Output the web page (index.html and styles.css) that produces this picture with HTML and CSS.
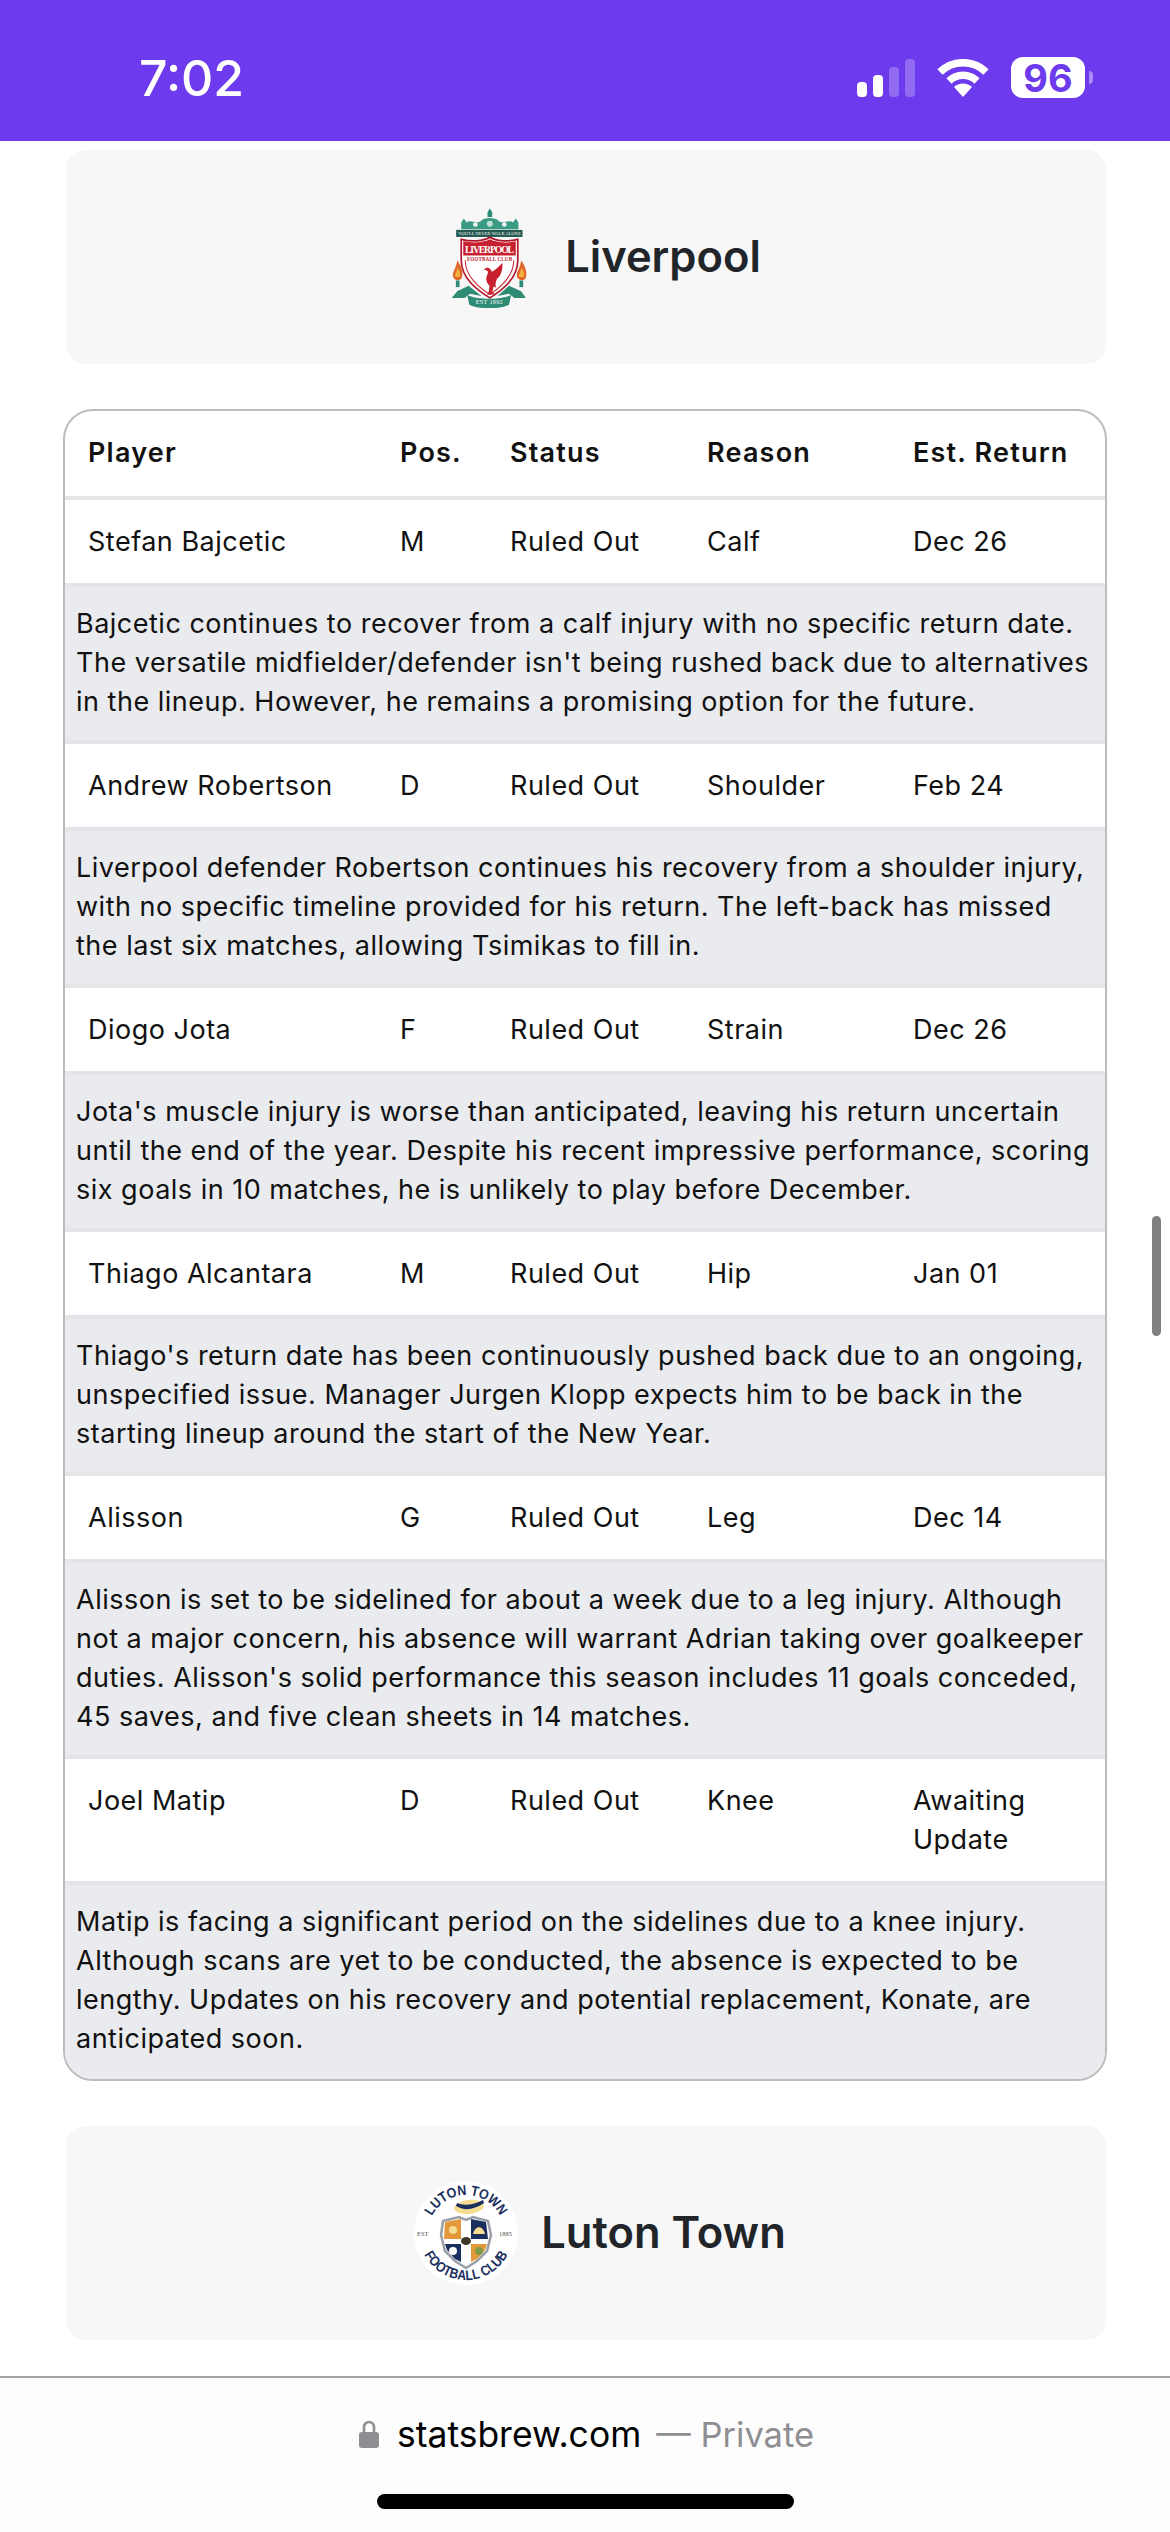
FILE: index.html
```html
<!DOCTYPE html>
<html lang="en">
<head>
    <meta charset="UTF-8">
    <meta name="viewport" content="width=device-width, initial-scale=1.0">
    <title>Injuries - Stats Brew</title>
    <link rel="stylesheet" href="styles.css">
</head>
<body>
    <header class="status-bar">
        <span class="clock">7:02</span>
        <div class="status-icons">
            <svg class="signal" width="58" height="38" viewBox="0 0 58 38">
                <rect x="0" y="23" width="10" height="15" rx="4" fill="#fff"/>
                <rect x="16" y="16" width="10" height="22" rx="4" fill="#fff"/>
                <rect x="32" y="8" width="10" height="30" rx="4" fill="#fff" opacity="0.25"/>
                <rect x="48" y="0" width="10" height="38" rx="4" fill="#fff" opacity="0.25"/>
            </svg>
            <svg class="wifi" width="52" height="38" viewBox="0 0 52 38">
                <path d="M3 13 A33 33 0 0 1 49 13" fill="none" stroke="#fff" stroke-width="7.5"/>
                <path d="M12 22 A20 20 0 0 1 40 22" fill="none" stroke="#fff" stroke-width="7.5"/>
                <path d="M26 38 L17 28 A13 13 0 0 1 35 28 Z" fill="#fff"/>
            </svg>
            <div class="battery">
                <span class="battery-level">96</span>
                <span class="battery-nub"></span>
            </div>
        </div>
    </header>

    <main class="content">
        <div class="team-card">
            <svg class="crest-lfc" width="76" height="101" viewBox="150 82 225 300">
                <!-- gates -->
                <path d="M258 98 L265 86 L272 98 L272 112 L258 112 Z" fill="#2e8b74"/>
                <path d="M180 148 V128 L188 116 L196 128 C210 118 222 134 238 124 C246 112 284 112 292 124 C308 134 320 118 334 128 L342 116 L350 128 V148 Z" fill="#3a9a82"/>
                <circle cx="222" cy="134" r="7" fill="#f7f7f7"/>
                <circle cx="265" cy="132" r="9" fill="#bfe2d8"/>
                <circle cx="308" cy="134" r="7" fill="#f7f7f7"/>
                <rect x="165" y="150" width="197" height="21" fill="#24594f"/>
                <text class="crest-motto" x="264" y="165" text-anchor="middle" textLength="186">YOU'LL NEVER WALK ALONE</text>
                <!-- shield -->
                <path d="M180 178 C210 186 245 184 265 172 C285 184 320 186 348 178 V240 C348 295 300 330 265 352 C230 330 180 295 180 240 Z" fill="#fff" stroke="#b3162a" stroke-width="5"/>
                <path d="M186 184 C214 190 245 188 265 178 C285 188 316 190 342 184 V226 H186 Z" fill="#c8202f"/>
                <path d="M192 240 C192 290 235 322 265 342" fill="none" stroke="#c8202f" stroke-width="3"/>
                <path d="M336 240 C336 290 295 322 265 342" fill="none" stroke="#c8202f" stroke-width="3"/>
                <text class="crest-name" x="264" y="220" text-anchor="middle" textLength="146">LIVERPOOL</text>
                <text class="crest-sub" x="264" y="241" text-anchor="middle" textLength="134">FOOTBALL CLUB</text>
                <!-- liver bird -->
                <path d="M247 268 L256 262 L264 264 L272 274 C282 268 292 258 302 248 C304 268 298 286 286 296 C282 306 280 314 284 322 L276 318 L272 336 L284 342 H256 L262 334 L264 316 C256 308 252 298 256 288 L260 274 L254 270 Z" fill="#c8202f"/>
                <!-- flames -->
                <path d="M168 240 C182 260 186 276 182 292 C178 302 160 302 156 290 C152 274 166 264 168 240 Z" fill="#e0662a"/>
                <path d="M169 262 C176 272 178 282 176 290 H162 C160 280 168 274 169 262 Z" fill="#f3b23c"/>
                <path d="M358 240 C372 260 376 276 372 292 C368 302 350 302 346 290 C342 274 356 264 358 240 Z" fill="#e0662a"/>
                <path d="M359 262 C366 272 368 282 366 290 H352 C350 280 358 274 359 262 Z" fill="#f3b23c"/>
                <rect x="164" y="300" width="11" height="20" fill="#2e8b74"/>
                <rect x="353" y="300" width="11" height="20" fill="#2e8b74"/>
                <!-- ribbons -->
                <path d="M152 352 L168 332 L202 316 L240 346 L206 340 L190 352 Z" fill="#2e8b74"/>
                <path d="M372 352 L358 332 L322 316 L288 346 L322 340 L338 352 Z" fill="#2e8b74"/>
                <path d="M198 344 C232 358 296 358 328 344 L322 372 C296 386 230 386 204 372 Z" fill="#2e8b74"/>
                <text class="crest-est" x="263" y="371" text-anchor="middle" textLength="80">EST 1892</text>
            </svg>
            <h2 class="team-name">Liverpool</h2>
        </div>

        <div class="table-wrap">
            <table class="injury-table">
                <colgroup>
                    <col class="col-player">
                    <col class="col-pos">
                    <col class="col-status">
                    <col class="col-reason">
                    <col class="col-return">
                </colgroup>
                <thead>
                    <tr>
                        <th>Player</th>
                        <th>Pos.</th>
                        <th>Status</th>
                        <th>Reason</th>
                        <th>Est. Return</th>
                    </tr>
                </thead>
                <tbody>
                    <tr>
                        <td>Stefan Bajcetic</td><td>M</td><td>Ruled Out</td><td>Calf</td><td>Dec 26</td>
                    </tr>
                    <tr>
                        <td class="detail" colspan="5">Bajcetic continues to recover from a calf injury with no specific return date. The versatile midfielder/defender isn't being rushed back due to alternatives in the lineup. However, he remains a promising option for the future.</td>
                    </tr>
                    <tr>
                        <td>Andrew Robertson</td><td>D</td><td>Ruled Out</td><td>Shoulder</td><td>Feb 24</td>
                    </tr>
                    <tr>
                        <td class="detail" colspan="5">Liverpool defender Robertson continues his recovery from a shoulder injury, with no specific timeline provided for his return. The left-back has missed the last six matches, allowing Tsimikas to fill in.</td>
                    </tr>
                    <tr>
                        <td>Diogo Jota</td><td>F</td><td>Ruled Out</td><td>Strain</td><td>Dec 26</td>
                    </tr>
                    <tr>
                        <td class="detail" colspan="5">Jota's muscle injury is worse than anticipated, leaving his return uncertain until the end of the year. Despite his recent impressive performance, scoring six goals in 10 matches, he is unlikely to play before December.</td>
                    </tr>
                    <tr>
                        <td>Thiago Alcantara</td><td>M</td><td>Ruled Out</td><td>Hip</td><td>Jan 01</td>
                    </tr>
                    <tr>
                        <td class="detail" colspan="5">Thiago's return date has been continuously pushed back due to an ongoing, unspecified issue. Manager Jurgen Klopp expects him to be back in the starting lineup around the start of the New Year.</td>
                    </tr>
                    <tr>
                        <td>Alisson</td><td>G</td><td>Ruled Out</td><td>Leg</td><td>Dec 14</td>
                    </tr>
                    <tr>
                        <td class="detail" colspan="5">Alisson is set to be sidelined for about a week due to a leg injury. Although not a major concern, his absence will warrant Adrian taking over goalkeeper duties. Alisson's solid performance this season includes 11 goals conceded, 45 saves, and five clean sheets in 14 matches.</td>
                    </tr>
                    <tr>
                        <td>Joel Matip</td><td>D</td><td>Ruled Out</td><td>Knee</td><td>Awaiting Update</td>
                    </tr>
                    <tr>
                        <td class="detail" colspan="5">Matip is facing a significant period on the sidelines due to a knee injury. Although scans are yet to be conducted, the absence is expected to be lengthy. Updates on his recovery and potential replacement, Konate, are anticipated soon.</td>
                    </tr>
                </tbody>
            </table>
        </div>

        <div class="team-card">
            <svg class="crest-luton" width="108" height="108" viewBox="0 0 108 108">
                <defs>
                    <path id="lutonTop" d="M16 54 A38 38 0 0 1 92 54"/>
                    <path id="lutonBottom" d="M7 54 A47 47 0 0 0 101 54"/>
                </defs>
                <circle cx="54" cy="54" r="52" fill="#fff"/>
                <text class="luton-ring"><textPath href="#lutonTop" startOffset="50%" text-anchor="middle" textLength="84" lengthAdjust="spacingAndGlyphs">LUTON TOWN</textPath></text>
                <text class="luton-ring"><textPath href="#lutonBottom" startOffset="50%" text-anchor="middle" textLength="103" lengthAdjust="spacingAndGlyphs">FOOTBALL CLUB</textPath></text>
                <text class="luton-est" x="5" y="57">EST</text>
                <text class="luton-est" x="87" y="57">1885</text>
                <!-- boater hat -->
                <ellipse cx="57" cy="28" rx="15" ry="7" fill="#f4dc92" transform="rotate(-6 57 28)"/>
                <path d="M44 27 C52 32 62 31 72 24 L71 21 C62 26 52 27 45 24 Z" fill="#1b2f5e"/>
                <!-- shield -->
                <path d="M31 42 L47 38 L54 41 L61 38 L76 42 L79 56 L75 72 L65 82 L54 89 L43 82 L33 72 L29 56 Z" fill="#fff" stroke="#9aa0a6" stroke-width="2.5"/>
                <path d="M33 43 L49 40 V60 H32 Z" fill="#e3993a"/>
                <path d="M59 40 L74 43 L76 60 H59 Z" fill="#1b2f5e"/>
                <path d="M33 65 H49 V83 L43 80 L35 71 Z" fill="#1b2f5e"/>
                <path d="M59 65 H75 L73 71 L65 80 L59 83 Z" fill="#e3993a"/>
                <circle cx="41" cy="51" r="4" fill="#f4dc92"/>
                <path d="M61 55 C63 46 71 46 73 55 Z" fill="#f4dc92"/>
                <circle cx="41" cy="72" r="4" fill="#fff"/>
                <circle cx="67" cy="72" r="4" fill="#7d9b46"/>
                <ellipse cx="54" cy="62" rx="5" ry="4" fill="#40392a"/>
            </svg>
            <h2 class="team-name">Luton Town</h2>
        </div>

        <div class="scroll-thumb"></div>
    </main>

    <footer class="url-bar">
        <div class="url-line">
            <svg class="lock" width="20" height="28" viewBox="0 0 20 28">
                <path d="M5 13 V7 A5 5 0 0 1 15 7 V13" fill="none" stroke="#8e8e93" stroke-width="2.6"/>
                <rect x="0" y="12" width="20" height="16" rx="3" fill="#8e8e93"/>
            </svg>
            <span class="url-host">statsbrew.com</span>
            <span class="url-note">— Private</span>
        </div>
        <div class="home-indicator"></div>
    </footer>
</body>
</html>
```

FILE: styles.css
```css
* {
    margin: 0;
    padding: 0;
    box-sizing: border-box;
}

body {
    width: 1170px;
    height: 2532px;
    display: flex;
    flex-direction: column;
    background: #fff;
    color: #111;
    font-family: Inter, "Liberation Sans", sans-serif;
    overflow: hidden;
}

.status-bar {
    height: 141px;
    flex-shrink: 0;
    display: flex;
    justify-content: space-between;
    align-items: center;
    padding: 14px 85px 0 139px;
    background: #6d3aee;
    color: #fff;
}

.clock {
    font-size: 50px;
    font-weight: 500;
    line-height: 1;
}

.status-icons {
    display: flex;
    align-items: center;
    gap: 22px;
}

.battery {
    position: relative;
    width: 74px;
    height: 41px;
    display: flex;
    justify-content: center;
    align-items: center;
    background: #fff;
    border-radius: 12px;
    color: #6d3aee;
    font-size: 38px;
    font-weight: 700;
}

.battery-nub {
    position: absolute;
    right: -8px;
    top: 14px;
    width: 4px;
    height: 13px;
    background: #a98cf5;
    border-radius: 0 4px 4px 0;
}

.content {
    position: relative;
    flex: 1;
    padding: 9px 63px 0;
}

.team-card {
    width: 1040px;
    height: 214px;
    margin-left: 3px;
    display: flex;
    justify-content: center;
    align-items: center;
    background: #f7f7f8;
    border-radius: 20px;
}

.crest-lfc {
    margin: 0 38px 0 40px;
}

.crest-luton {
    margin: 0 21px 0 26px;
}

.team-name {
    margin-bottom: 3px;
    font-size: 43.5px;
    font-weight: 600;
    color: #212529;
}

.crest-motto {
    font-size: 13px;
    fill: #fff;
    font-family: "Liberation Serif", serif;
}

.crest-name {
    font-size: 29px;
    font-weight: 700;
    fill: #fff;
    font-family: "Liberation Serif", serif;
}

.crest-sub {
    font-size: 15px;
    font-weight: 700;
    fill: #c8202f;
    font-family: "Liberation Serif", serif;
}

.crest-est {
    font-size: 18px;
    fill: #fff;
    font-family: "Liberation Serif", serif;
}

.luton-ring {
    font-size: 14px;
    font-weight: 700;
    fill: #1b2f5e;
    font-family: "Liberation Sans", sans-serif;
}

.luton-est {
    font-size: 6.5px;
    fill: #555;
    font-family: "Liberation Serif", serif;
}

.table-wrap {
    width: 1044px;
    margin: 45px 0;
    border: 2px solid #bcbcbc;
    border-radius: 30px;
    overflow: hidden;
}

.injury-table {
    width: 100%;
    table-layout: fixed;
    border-collapse: separate;
    border-spacing: 0;
    font-size: 27px;
    line-height: 39px;
    letter-spacing: 0.5px;
}

.col-player { width: 311px; }
.col-pos { width: 110px; }
.col-status { width: 197px; }
.col-reason { width: 206px; }
.col-return { width: 216px; }

.injury-table th {
    padding: 22px 24px 24px;
    text-align: left;
    font-weight: 600;
    letter-spacing: 1.2px;
    border-bottom: 4px solid #e3e5e8;
}

.injury-table td {
    padding: 22px 24px;
    vertical-align: top;
    border-bottom: 4px solid #e3e5e8;
}

.injury-table th:first-child,
.injury-table td:first-child {
    padding-left: 23px;
}

.injury-table td.detail {
    padding: 17px 12px 19px 11px;
    background: #e9ebee;
}

.injury-table tr:last-child td.detail {
    padding-bottom: 21px;
    border-bottom: none;
}

.scroll-thumb {
    position: absolute;
    top: 1075px;
    right: 9px;
    width: 9px;
    height: 120px;
    background: #808080;
    border-radius: 5px;
}

.url-bar {
    height: 156px;
    flex-shrink: 0;
    border-top: 2px solid #a3a3a3;
    background: #fdfdfd;
    display: flex;
    flex-direction: column;
    align-items: center;
    padding-top: 36px;
}

.url-line {
    display: flex;
    align-items: center;
    gap: 18px;
    height: 40px;
    margin-left: 3px;
    font-size: 35.5px;
}

.url-host {
    color: #000;
}

.url-note {
    margin-left: -3px;
    font-size: 34.5px;
    color: #8e8e93;
}

.home-indicator {
    width: 417px;
    height: 15px;
    margin-top: 40px;
    background: #000;
    border-radius: 8px;
}
```
